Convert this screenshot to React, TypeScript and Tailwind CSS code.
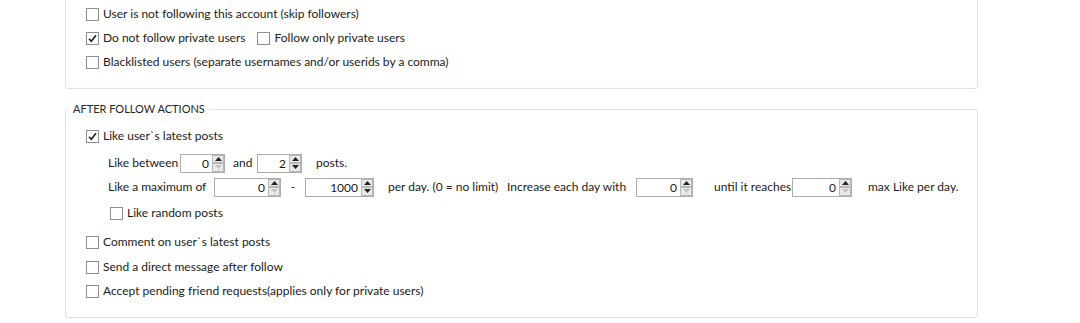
import type { ReactNode } from 'react';

function CheckBox({ checked = false }: { checked?: boolean }) {
  return (
    <span className="w-[13px] h-[13px] border border-[#8f8f8f] bg-white flex items-center justify-center shrink-0">
      {checked && (
        <svg width="11" height="11" viewBox="0 0 11 11">
          <path d="M2 5.8 L4.3 8.3 L9 2.2" fill="none" stroke="#1c1c1c" strokeWidth="1.6" />
        </svg>
      )}
    </span>
  );
}

function CheckRow({ label, checked, className = '' }: { label: string; checked?: boolean; className?: string }) {
  return (
    <label className={`flex items-center h-6 gap-[4px] ${className}`}>
      <CheckBox checked={checked} />
      <span>{label}</span>
    </label>
  );
}

function Arrow({ up, enabled }: { up: boolean; enabled: boolean }) {
  return (
    <span className="flex-1 bg-[#e8e8e8] border border-[#b8b8b8] flex items-center justify-center">
      <svg width="7" height="4" viewBox="0 0 7 4">
        <path
          d={up ? 'M0 4 L3.5 0 L7 4 Z' : 'M0 0 L3.5 4 L7 0 Z'}
          fill={enabled ? '#222' : '#c4c4c4'}
        />
      </svg>
    </span>
  );
}

function Spin({ value, width, downEnabled = false }: { value: string; width: string; downEnabled?: boolean }) {
  return (
    <span className={`${width} h-[19px] border border-[#acacac] bg-white flex items-stretch shrink-0`}>
      <span className="flex-1 text-right pr-[3px] leading-[17px]">{value}</span>
      <span className="w-[12px] flex flex-col">
        <Arrow up enabled />
        <Arrow up={false} enabled={downEnabled} />
      </span>
    </span>
  );
}

function Txt({ className = '', children }: { className?: string; children: ReactNode }) {
  return <span className={`shrink-0 ${className}`}>{children}</span>;
}

export default function App() {
  return (
    <div
      className="w-[1080px] h-[323px] bg-white overflow-hidden pl-[65px] text-[12px] text-[#1b1b1b]"
      style={{ fontFamily: 'Lato, "Open Sans", sans-serif' }}
    >
      <div className="w-[913px] mt-[-20px] border border-[#dce3ea] rounded-[3px] pt-[21px] pb-[14px] pl-[20px]">
        <CheckRow label="User is not following this account (skip followers)" />
        <div className="flex items-center">
          <CheckRow label="Do not follow private users" checked />
          <CheckRow label="Follow only private users" className="ml-[12px]" />
        </div>
        <CheckRow label="Blacklisted users (separate usernames and/or userids by a comma)" />
      </div>

      <fieldset className="w-[913px] mt-[12px] border border-[#dce3ea] rounded-[3px] pb-[14px]">
        <legend className="ml-[3px] px-[4px] leading-[16px] text-[11px] text-[#262626]">AFTER FOLLOW ACTIONS</legend>
        <div className="pl-[20px]">
          <CheckRow label="Like user`s latest posts" checked className="mt-[7px]" />
          <div className="pl-[22px]">
            <div className="flex items-center h-6 mt-[3px]">
              <Txt className="w-[72px]">Like between</Txt>
              <Spin value="0" width="w-[45px]" />
              <Txt className="w-[32px] pl-[8px]">and</Txt>
              <Spin value="2" width="w-[45px]" downEnabled />
              <Txt className="ml-[14px]">posts.</Txt>
            </div>
            <div className="flex items-center h-6">
              <Txt className="w-[106px]">Like a maximum of</Txt>
              <Spin value="0" width="w-[67px]" />
              <Txt className="w-[24px] text-center">-</Txt>
              <Spin value="1000" width="w-[69px]" downEnabled />
              <Txt className="w-[133px] pl-[14px]">per day. (0 = no limit)</Txt>
              <Txt className="w-[129px]">Increase each day with</Txt>
              <Spin value="0" width="w-[57px]" />
              <Txt className="w-[99px] pl-[21px]">until it reaches</Txt>
              <Spin value="0" width="w-[60px]" />
              <Txt className="ml-[16px]">max Like per day.</Txt>
            </div>
            <CheckRow label="Like random posts" className="mt-[2px] ml-[2px]" />
          </div>
          <CheckRow label="Comment on user`s latest posts" className="mt-[5px]" />
          <CheckRow label="Send a direct message after follow" className="mt-[1px]" />
          <CheckRow label="Accept pending friend requests(applies only for private users)" />
        </div>
      </fieldset>
    </div>
  );
}
